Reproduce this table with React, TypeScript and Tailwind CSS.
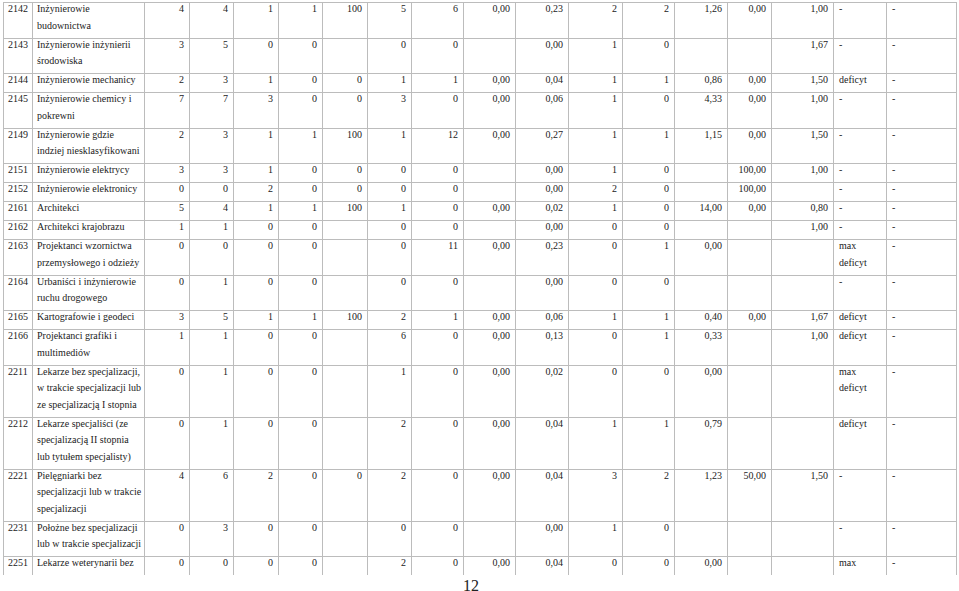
import React from 'react';

type Row = {
  code: string;
  name: string[];
  values: string[];
};

// column widths, left to right
const colWidths = [
  'w-[29px]',
  'w-[112px]',
  'w-[45px]',
  'w-[44px]',
  'w-[45px]',
  'w-[44px]',
  'w-[45px]',
  'w-[44px]',
  'w-[52px]',
  'w-[52px]',
  'w-[53px]',
  'w-[54px]',
  'w-[52px]',
  'w-[53px]',
  'w-[44px]',
  'w-[62px]',
  'w-[53px]',
  'w-[70px]',
];

const rows: Row[] = [
  {
    code: '2142',
    name: ['Inżynierowie', 'budownictwa'],
    values: ['4', '4', '1', '1', '100', '5', '6', '0,00', '0,23', '2', '2', '1,26', '0,00', '1,00', '-', '-'],
  },
  {
    code: '2143',
    name: ['Inżynierowie inżynierii', 'środowiska'],
    values: ['3', '5', '0', '0', '', '0', '0', '', '0,00', '1', '0', '', '', '1,67', '-', '-'],
  },
  {
    code: '2144',
    name: ['Inżynierowie mechanicy'],
    values: ['2', '3', '1', '0', '0', '1', '1', '0,00', '0,04', '1', '1', '0,86', '0,00', '1,50', 'deficyt', '-'],
  },
  {
    code: '2145',
    name: ['Inżynierowie chemicy i', 'pokrewni'],
    values: ['7', '7', '3', '0', '0', '3', '0', '0,00', '0,06', '1', '0', '4,33', '0,00', '1,00', '-', '-'],
  },
  {
    code: '2149',
    name: ['Inżynierowie gdzie', 'indziej niesklasyfikowani'],
    values: ['2', '3', '1', '1', '100', '1', '12', '0,00', '0,27', '1', '1', '1,15', '0,00', '1,50', '-', '-'],
  },
  {
    code: '2151',
    name: ['Inżynierowie elektrycy'],
    values: ['3', '3', '1', '0', '0', '0', '0', '', '0,00', '1', '0', '', '100,00', '1,00', '-', '-'],
  },
  {
    code: '2152',
    name: ['Inżynierowie elektronicy'],
    values: ['0', '0', '2', '0', '0', '0', '0', '', '0,00', '2', '0', '', '100,00', '', '-', '-'],
  },
  {
    code: '2161',
    name: ['Architekci'],
    values: ['5', '4', '1', '1', '100', '1', '0', '0,00', '0,02', '1', '0', '14,00', '0,00', '0,80', '-', '-'],
  },
  {
    code: '2162',
    name: ['Architekci krajobrazu'],
    values: ['1', '1', '0', '0', '', '0', '0', '', '0,00', '0', '0', '', '', '1,00', '-', '-'],
  },
  {
    code: '2163',
    name: ['Projektanci wzornictwa', 'przemysłowego i odzieży'],
    values: ['0', '0', '0', '0', '', '0', '11', '0,00', '0,23', '0', '1', '0,00', '', '', 'max\ndeficyt', '-'],
  },
  {
    code: '2164',
    name: ['Urbaniści i inżynierowie', 'ruchu drogowego'],
    values: ['0', '1', '0', '0', '', '0', '0', '', '0,00', '0', '0', '', '', '', '-', '-'],
  },
  {
    code: '2165',
    name: ['Kartografowie i geodeci'],
    values: ['3', '5', '1', '1', '100', '2', '1', '0,00', '0,06', '1', '1', '0,40', '0,00', '1,67', 'deficyt', '-'],
  },
  {
    code: '2166',
    name: ['Projektanci grafiki i', 'multimediów'],
    values: ['1', '1', '0', '0', '', '6', '0', '0,00', '0,13', '0', '1', '0,33', '', '1,00', 'deficyt', '-'],
  },
  {
    code: '2211',
    name: ['Lekarze bez specjalizacji,', 'w trakcie specjalizacji lub', 'ze specjalizacją I stopnia'],
    values: ['0', '1', '0', '0', '', '1', '0', '0,00', '0,02', '0', '0', '0,00', '', '', 'max\ndeficyt', '-'],
  },
  {
    code: '2212',
    name: ['Lekarze specjaliści (ze', 'specjalizacją II stopnia', 'lub tytułem specjalisty)'],
    values: ['0', '1', '0', '0', '', '2', '0', '0,00', '0,04', '1', '1', '0,79', '', '', 'deficyt', '-'],
  },
  {
    code: '2221',
    name: ['Pielęgniarki bez', 'specjalizacji lub w trakcie', 'specjalizacji'],
    values: ['4', '6', '2', '0', '0', '2', '0', '0,00', '0,04', '3', '2', '1,23', '50,00', '1,50', '-', '-'],
  },
  {
    code: '2231',
    name: ['Położne bez specjalizacji', 'lub w trakcie specjalizacji'],
    values: ['0', '3', '0', '0', '', '0', '0', '', '0,00', '1', '0', '', '', '', '-', '-'],
  },
  {
    code: '2251',
    name: ['Lekarze weterynarii bez'],
    values: ['0', '0', '0', '0', '', '2', '0', '0,00', '0,04', '0', '0', '0,00', '', '', 'max', '-'],
  },
];

const Lines = ({ text, last }: { text: string[]; last: boolean }) => (
  <div className={last ? '-mt-[2px]' : '-mt-[2px] pb-[3.5px]'}>
    {text.map((line, i) => (
      <div key={i} className="whitespace-nowrap">
        {line}
      </div>
    ))}
  </div>
);

const TableRow = ({ row, last }: { row: Row; last: boolean }) => {
  const cell = last
    ? 'border-x border-t border-b-0 border-[#bcbcbc] align-top h-[18px]'
    : 'border border-[#bcbcbc] align-top';

  return (
    <tr>
      <td className={`${cell} pl-[4px] pr-[2px]`}>
        <Lines text={[row.code]} last={last} />
      </td>
      <td className={`${cell} pl-[4px] pr-[2px]`}>
        <Lines text={row.name} last={last} />
      </td>
      {row.values.map((v, i) => {
        const left = i >= 14;
        return (
          <td
            key={i}
            className={`${cell} ${left ? 'text-left pl-[5px]' : 'text-right pr-[5px]'}`}
          >
            {v && <Lines text={v.split('\n')} last={last} />}
          </td>
        );
      })}
    </tr>
  );
};

export default function App() {
  return (
    <div className="h-[591px] w-[959px] overflow-hidden bg-white text-[#222] font-[family-name:Liberation_Serif,Times_New_Roman,serif] text-[10px] leading-[16.5px]">
      <div className="pt-[2px] pl-[3px]">
        <table className="table-fixed border-collapse w-[954px]">
          <colgroup>
            {colWidths.map((w, i) => (
              <col key={i} className={w} />
            ))}
          </colgroup>
          <tbody>
            {rows.map((row, i) => (
              <TableRow key={row.code} row={row} last={i === rows.length - 1} />
            ))}
          </tbody>
        </table>
      </div>
      <div className="pl-[463px] mt-[3px] text-[16px] leading-[16px]">12</div>
    </div>
  );
}
